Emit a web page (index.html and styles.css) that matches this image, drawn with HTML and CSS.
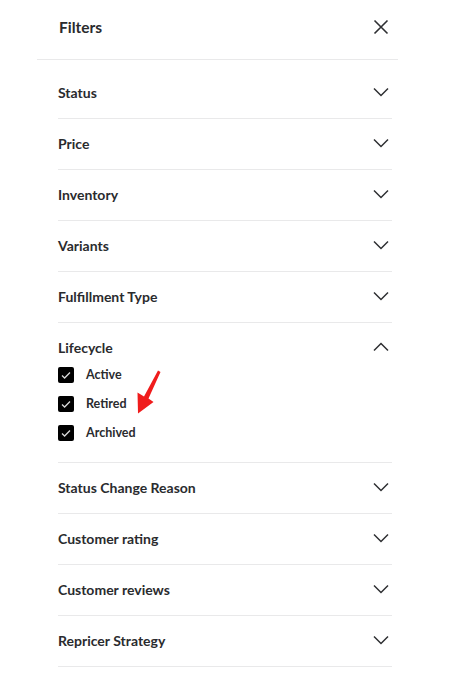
FILE: index.html
```html
<!DOCTYPE html>
<html>
<head>
<meta charset="utf-8">
<link rel="stylesheet" href="styles.css">
</head>
<body>
<div class="panel">
  <div class="header">
    <h2 class="title">Filters</h2>
    <svg class="icon" width="22" height="22" viewBox="0 0 22 22"><path d="M4.5 4.5 L17.5 17.5 M17.5 4.5 L4.5 17.5" stroke="#2e2f32" stroke-width="1.6" fill="none"/></svg>
  </div>
  <div class="list">
    <div class="row"><div class="row-head"><span>Status</span><svg class="icon" width="22" height="22" viewBox="0 0 22 22"><path d="M4 7.5 L11 14.5 L18 7.5" stroke="#2e2f32" stroke-width="1.5" fill="none"/></svg></div></div>
    <div class="row"><div class="row-head"><span>Price</span><svg class="icon" width="22" height="22" viewBox="0 0 22 22"><path d="M4 7.5 L11 14.5 L18 7.5" stroke="#2e2f32" stroke-width="1.5" fill="none"/></svg></div></div>
    <div class="row"><div class="row-head"><span>Inventory</span><svg class="icon" width="22" height="22" viewBox="0 0 22 22"><path d="M4 7.5 L11 14.5 L18 7.5" stroke="#2e2f32" stroke-width="1.5" fill="none"/></svg></div></div>
    <div class="row"><div class="row-head"><span>Variants</span><svg class="icon" width="22" height="22" viewBox="0 0 22 22"><path d="M4 7.5 L11 14.5 L18 7.5" stroke="#2e2f32" stroke-width="1.5" fill="none"/></svg></div></div>
    <div class="row"><div class="row-head"><span>Fulfillment Type</span><svg class="icon" width="22" height="22" viewBox="0 0 22 22"><path d="M4 7.5 L11 14.5 L18 7.5" stroke="#2e2f32" stroke-width="1.5" fill="none"/></svg></div></div>
    <div class="row open">
      <div class="row-head"><span>Lifecycle</span><svg class="icon" width="22" height="22" viewBox="0 0 22 22"><path d="M4 14.5 L11 7.5 L18 14.5" stroke="#2e2f32" stroke-width="1.5" fill="none"/></svg></div>
      <div class="options">
        <label class="option"><span class="box"><svg width="16" height="16" viewBox="0 0 16 16"><path d="M4 8.5 L6.6 11 L12 5.5" stroke="#d8d8d8" stroke-width="1.3" fill="none"/></svg></span>Active</label>
        <label class="option"><span class="box"><svg width="16" height="16" viewBox="0 0 16 16"><path d="M4 8.5 L6.6 11 L12 5.5" stroke="#d8d8d8" stroke-width="1.3" fill="none"/></svg></span>Retired</label>
        <label class="option"><span class="box"><svg width="16" height="16" viewBox="0 0 16 16"><path d="M4 8.5 L6.6 11 L12 5.5" stroke="#d8d8d8" stroke-width="1.3" fill="none"/></svg></span>Archived</label>
      </div>
    </div>
    <div class="row"><div class="row-head"><span>Status Change Reason</span><svg class="icon" width="22" height="22" viewBox="0 0 22 22"><path d="M4 7.5 L11 14.5 L18 7.5" stroke="#2e2f32" stroke-width="1.5" fill="none"/></svg></div></div>
    <div class="row"><div class="row-head"><span>Customer rating</span><svg class="icon" width="22" height="22" viewBox="0 0 22 22"><path d="M4 7.5 L11 14.5 L18 7.5" stroke="#2e2f32" stroke-width="1.5" fill="none"/></svg></div></div>
    <div class="row"><div class="row-head"><span>Customer reviews</span><svg class="icon" width="22" height="22" viewBox="0 0 22 22"><path d="M4 7.5 L11 14.5 L18 7.5" stroke="#2e2f32" stroke-width="1.5" fill="none"/></svg></div></div>
    <div class="row"><div class="row-head"><span>Repricer Strategy</span><svg class="icon" width="22" height="22" viewBox="0 0 22 22"><path d="M4 7.5 L11 14.5 L18 7.5" stroke="#2e2f32" stroke-width="1.5" fill="none"/></svg></div></div>
  </div>
</div>
<svg class="arrow" width="452" height="684" viewBox="0 0 452 684"><polygon points="158,370.5 160.5,372 148.5,398.5 153.5,402 138,413.5 137.5,392.5 144,396.5" fill="#f01c1c"/></svg>
</body>
</html>
```
FILE: styles.css
```css
html, body {
  margin: 0;
  padding: 0;
  background: #ffffff;
}
body {
  font-family: Lato, "Open Sans", sans-serif;
  color: #2a2b2e;
  position: relative;
  width: 452px;
  height: 684px;
  overflow: hidden;
}
.panel {
  margin-left: 37px;
  width: 361px;
}
.header {
  height: 59px;
  display: flex;
  align-items: center;
  justify-content: space-between;
  padding: 0 6px 0 22px;
  border-bottom: 1px solid #e9e9ea;
}
.title {
  margin: 0;
  font-size: 15.5px;
  font-weight: 700;
  line-height: 20px;
  margin-top: -5px;
}
.header .icon { margin-top: -6px; }
.icon { display: block; flex: none; }
.list {
  margin-left: 21px;
  width: 334px;
  padding-top: 8px;
}
.row {
  border-bottom: 1px solid #e9e9ea;
  padding: 14px 0 16px;
}
.row-head {
  display: flex;
  align-items: center;
  justify-content: space-between;
  height: 20px;
  font-size: 14px;
  font-weight: 700;
}
.row.open { padding-bottom: 15px; }
.options {
  margin-top: 3px;
  display: flex;
  flex-direction: column;
}
.option {
  height: 29px;
  display: flex;
  align-items: center;
  gap: 12px;
  font-size: 12.5px;
  font-weight: 700;
}
.box {
  width: 16px;
  height: 16px;
  background: #000;
  border-radius: 2px;
  display: block;
  flex: none;
}
.box svg { display: block; }
.arrow {
  position: absolute;
  left: 0;
  top: 0;
  pointer-events: none;
}
```
